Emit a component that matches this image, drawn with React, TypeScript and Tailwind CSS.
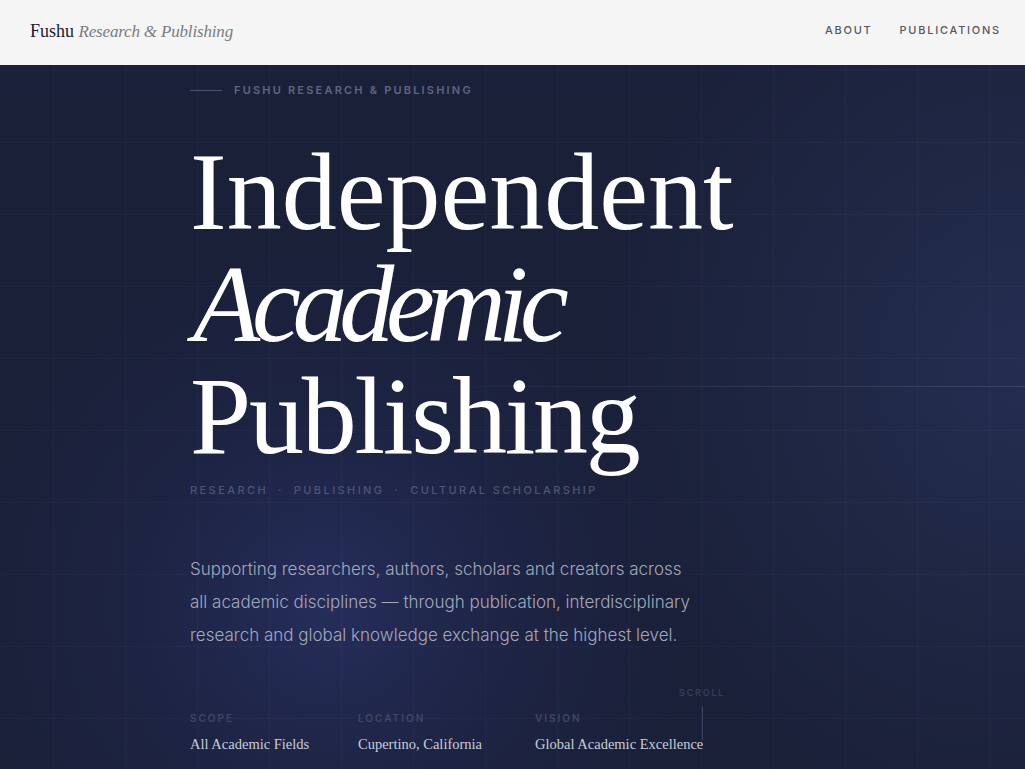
const SERIF = "font-['Liberation_Serif',serif]"
const SANS = "font-['Inter',sans-serif]"

const FACTS = [
  { label: 'Scope', value: 'All Academic Fields' },
  { label: 'Location', value: 'Cupertino, California' },
  { label: 'Vision', value: 'Global Academic Excellence' },
]

function Header() {
  return (
    <header className="h-[65px] bg-[#f5f5f5] flex items-center justify-between pl-[30px] pr-[24px] pb-[4px]">
      <div className={`${SERIF} text-[18px] leading-none`}>
        <span className="text-[#1c2030]">Fushu</span>{' '}
        <span className="italic text-[17px] tracking-[-0.01em] text-[#7a7c84]">Research &amp; Publishing</span>
      </div>
      <nav className={`${SANS} flex items-center gap-[27px] text-[11px] font-medium tracking-[0.16em] text-[#55575e]`}>
        <a>ABOUT</a>
        <a>PUBLICATIONS</a>
      </nav>
    </header>
  )
}

export default function App() {
  return (
    <div className="w-full h-[769px] overflow-hidden bg-[#1a2038]">
      <Header />

      <section className="relative h-[704px] overflow-hidden bg-[#1a2038]">
        {/* glows + grid */}
        <div className="absolute inset-0 bg-[radial-gradient(circle_at_330px_540px,rgba(48,58,125,0.5)_0px,rgba(40,50,110,0.22)_180px,transparent_360px)]" />
        <div className="absolute inset-0 bg-[radial-gradient(ellipse_420px_460px_at_1020px_300px,rgba(48,62,110,0.45),transparent)]" />
        <div className="absolute inset-0 bg-[linear-gradient(to_right,rgba(255,255,255,0.022)_1px,transparent_1px),linear-gradient(to_bottom,rgba(255,255,255,0.022)_1px,transparent_1px)] bg-[size:72px_72px] bg-[position:53px_5px]" />
        <div className="absolute left-[380px] right-0 top-[321px] h-px bg-[linear-gradient(to_right,transparent,rgba(255,255,255,0.06)_40%,rgba(255,255,255,0.11))]" />

        <div className="relative pl-[190px] pt-[17px]">
          {/* eyebrow */}
          <div className="flex items-center gap-3 h-4">
            <span className="w-8 h-px bg-[#4b5270]" />
            <span className={`${SANS} text-[11px] font-semibold tracking-[0.2em] text-[#5e6582]`}>
              FUSHU RESEARCH &amp; PUBLISHING
            </span>
          </div>

          {/* headline */}
          <h1 className={`${SERIF} mt-[38px] text-[110px] leading-[112px] text-white font-normal`}>
            <span className="block">Independent</span>
            <span className="block italic tracking-[-0.075em] ml-[3px]">Academic</span>
            <span className="block tracking-[-0.02em]">Publishing</span>
          </h1>

          {/* tags */}
          <div className={`${SANS} mt-[10px] h-4 flex items-center text-[11px] font-medium tracking-[0.22em] text-[#4d5576]`}>
            <span>RESEARCH</span>
            <span className="mx-[10px]">·</span>
            <span>PUBLISHING</span>
            <span className="mx-[10px]">·</span>
            <span>CULTURAL SCHOLARSHIP</span>
          </div>

          {/* lead */}
          <p className={`${SANS} mt-[55px] w-[506px] text-[17px] leading-[33px] font-light text-[#a3a8bb]`}>
            Supporting researchers, authors, scholars and creators across all academic disciplines — through publication, interdisciplinary research and global knowledge exchange at the highest level.
          </p>

          {/* facts */}
          <div className="mt-[59px] grid grid-cols-[168px_177px_auto]">
            {FACTS.map(f => (
              <div key={f.label} className="flex flex-col">
                <span className={`${SANS} h-[14px] leading-[14px] text-[10px] font-semibold tracking-[0.2em] uppercase text-[#3f4767]`}>
                  {f.label}
                </span>
                <span className={`${SERIF} mt-2 text-[14.5px] leading-[22px] text-[#c9cdd9]`}>{f.value}</span>
              </div>
            ))}
          </div>
        </div>

        {/* scroll hint */}
        <div className="absolute left-[679px] top-[623px] flex flex-col items-center">
          <span className={`${SANS} text-[9px] leading-[10px] font-semibold tracking-[0.2em] text-[#363e5c]`}>SCROLL</span>
          <span className="mt-[8px] w-px h-[34px] bg-[#3a4262]" />
        </div>
      </section>
    </div>
  )
}
